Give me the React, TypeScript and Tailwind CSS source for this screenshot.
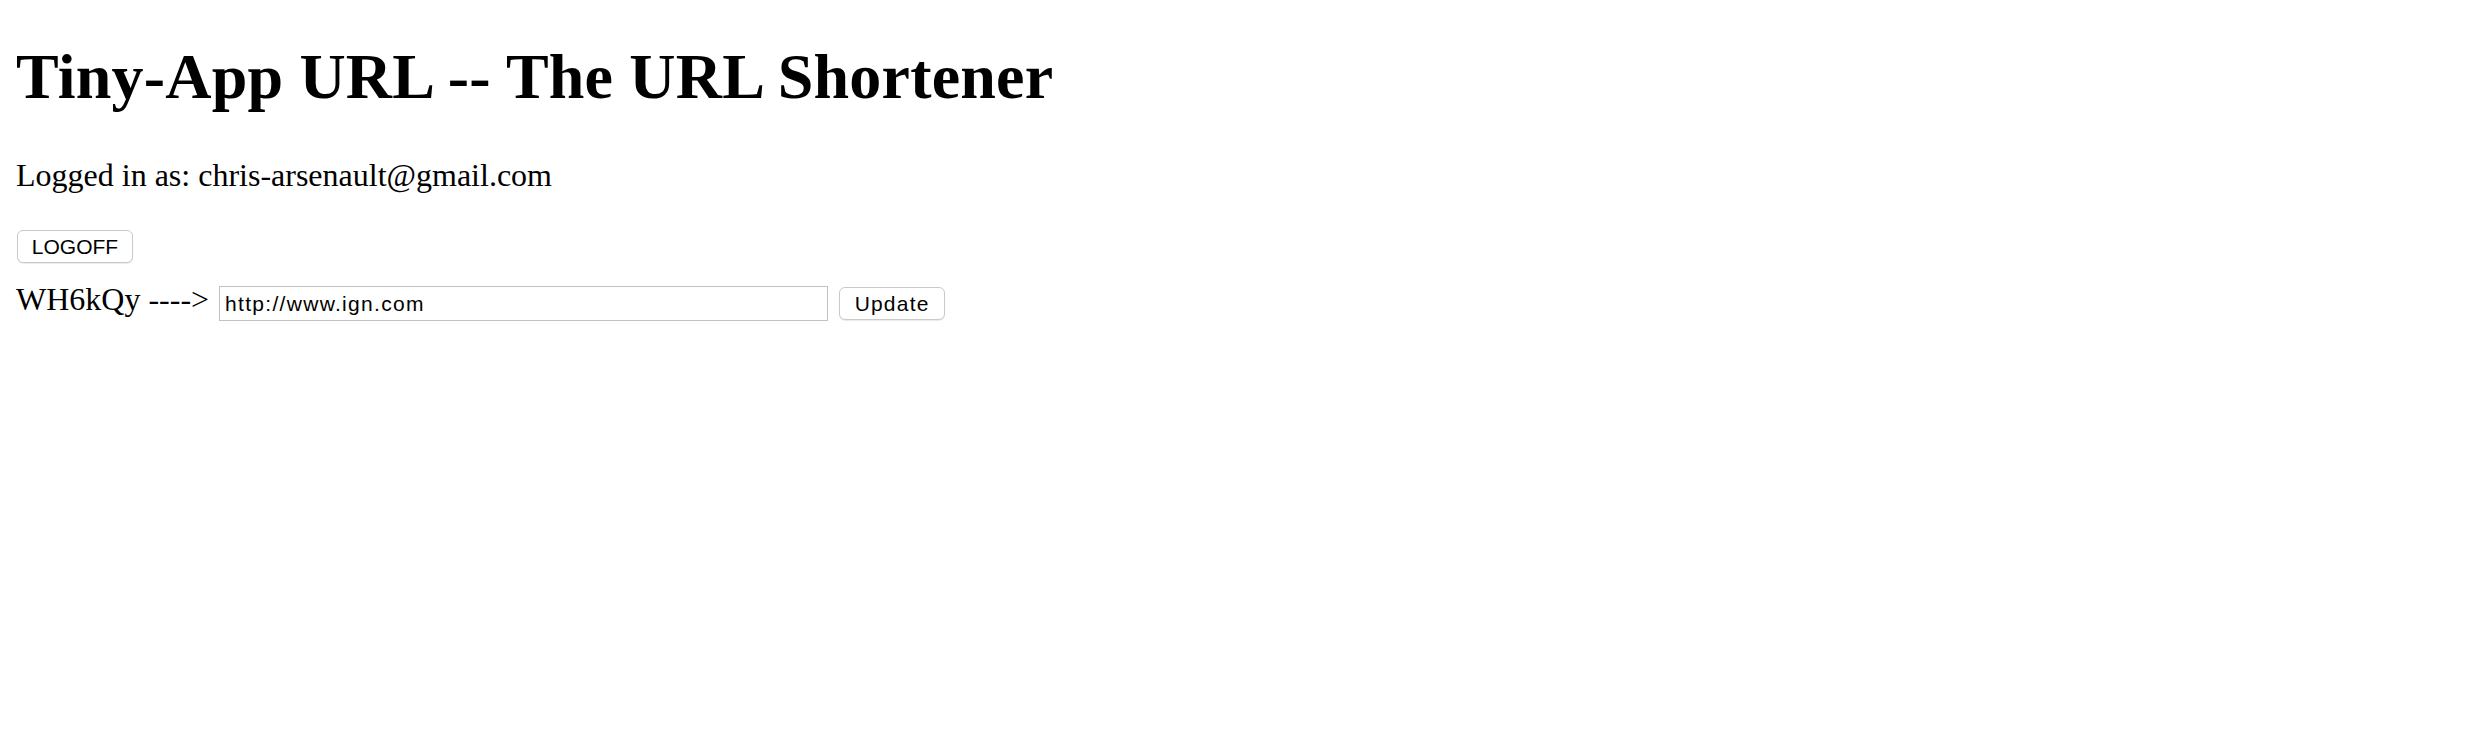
export default function App() {
  return (
    <div
      className="w-[2488px] h-[750px] bg-white text-black pl-[16px] pt-[40px]"
      style={{ fontFamily: '"Liberation Serif", "Times New Roman", serif' }}
    >
      <h1 className="text-[64px] leading-[74px] font-bold m-0 tracking-[0.2px]">
        Tiny-App URL -- The URL Shortener
      </h1>
      <p className="mt-[43px] text-[32px] leading-[37px]">
        Logged in as: chris-arsenault@gmail.com
      </p>
      <form className="mt-[36px]" onSubmit={(e) => e.preventDefault()}>
        <button
          type="submit"
          className="ml-[1px] w-[116px] h-[33px] flex items-center justify-center rounded-[6px] border border-[#c9c9c9] bg-white text-[21px] text-black shadow-[0_1px_1px_rgba(0,0,0,0.08)]"
          style={{ fontFamily: '"Liberation Sans", Arial, sans-serif' }}
        >
          LOGOFF
        </button>
      </form>
      <form
        className="mt-[18px] flex items-start"
        onSubmit={(e) => e.preventDefault()}
      >
        <span className="text-[32px] leading-[37px] whitespace-pre">
          WH6kQy ----&gt;
        </span>
        <input
          type="text"
          defaultValue="http://www.ign.com"
          className="ml-[10px] mt-[5px] w-[609px] h-[35px] border border-[#c2c2c2] bg-white px-[5px] text-[21px] tracking-[1.3px] text-black outline-none"
          style={{ fontFamily: '"Liberation Sans", Arial, sans-serif' }}
        />
        <button
          type="submit"
          className="ml-[11px] mt-[6px] w-[106px] h-[33px] flex items-center justify-center rounded-[6px] border border-[#c9c9c9] bg-white text-[21px] tracking-[1.2px] text-black shadow-[0_1px_1px_rgba(0,0,0,0.08)]"
          style={{ fontFamily: '"Liberation Sans", Arial, sans-serif' }}
        >
          Update
        </button>
      </form>
    </div>
  );
}
